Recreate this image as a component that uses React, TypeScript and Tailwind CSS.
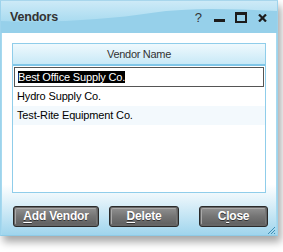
import React from "react";

const font = { fontFamily: '"Liberation Sans", Arial, sans-serif' };

function Btn({ w, pre, u, post }: { w: string; pre: string; u: string; post: string }) {
  return (
    <div
      className={`${w} h-[21px] rounded-[3px] border border-[#2a2a2a] p-px bg-[#666]`}
    >
      <div className="h-full w-full rounded-[2px] border-t border-l border-[#a9a9a9] border-r border-b border-r-[#777] border-b-[#666] bg-gradient-to-b from-[#8d8d8d] via-[#747474] to-[#626262] flex items-center justify-center">
        <span className="text-white font-bold text-[12px] tracking-[-0.2px] leading-none [text-shadow:0_1px_0_#333]">
          {pre}
          <span className="underline underline-offset-[2px]">{u}</span>
          {post}
        </span>
      </div>
    </div>
  );
}

export default function App() {
  return (
    <div className="w-[283px] h-[252px] bg-white" style={font}>
      <div className="w-[278px] h-[236px] flex flex-col border border-t-[#a8d6ec] border-x-[#9dd3ec] border-b-[#8fcbe6] bg-[#a6d9ef] shadow-[3px_6px_8px_rgba(0,0,0,0.35)]">
        {/* Title bar */}
        <div className="relative h-[32px] shrink-0 overflow-hidden bg-[#96d0ea]">
          <svg className="absolute inset-0" width="278" height="32" viewBox="0 0 278 32">
            <defs>
              <linearGradient id="tg" x1="0" y1="0" x2="0" y2="1">
                <stop offset="0" stopColor="#cdeaf7" />
                <stop offset="1" stopColor="#a9dbf0" />
              </linearGradient>
            </defs>
            <path d="M0 0 H278 V10 C230 8 190 6 150 12 C110 18 60 22 0 20 Z" fill="url(#tg)" />
          </svg>
          <div className="relative flex items-center h-full pl-[9px] pr-[10px]">
            <span className="text-[12.5px] font-bold text-[#333] tracking-[-0.2px]">Vendors</span>
            <div className="flex-1" />
            <span className="text-[13px] text-[#333] leading-none mr-[12px] mt-[1px]">?</span>
            <div className="w-[11px] h-[3px] bg-[#1c1c1c] mt-[7px] mr-[10px]" />
            <div className="w-[12px] h-[11px] border-2 border-t-[3px] border-[#1c1c1c] mr-[11px] mt-[1px]" />
            <svg width="9" height="8" viewBox="0 0 9 8" className="mt-[1px]">
              <path d="M1 0.5 L8 7.5 M8 0.5 L1 7.5" stroke="#1c1c1c" strokeWidth="2.2" />
            </svg>
          </div>
        </div>
        {/* Body */}
        <div className="flex-1 flex flex-col bg-gradient-to-b from-white from-[75%] to-[#9fd5ed] ml-px mr-px">
          <div className="pt-[10px] px-[10px]">
            <div className="h-[150px] border border-[#8fcdea] bg-white flex flex-col">
              <div className="h-[22px] shrink-0 bg-gradient-to-b from-[#eff9fd] to-[#c8e9f7] border-b-2 border-[#7fc6e8] flex items-center justify-center">
                <span className="text-[11px] text-[#333] tracking-[-0.3px]">Vendor Name</span>
              </div>
              <div className="h-[20px] mx-px mt-px border border-[#555] flex items-center pl-[3px]">
                <span className="bg-black text-white text-[11px] leading-[12px] tracking-[-0.15px]">
                  Best Office Supply Co.
                </span>
              </div>
              <div className="h-[19px] flex items-center pl-[4px]">
                <span className="text-black text-[11px] tracking-[-0.15px]">Hydro Supply Co.</span>
              </div>
              <div className="h-[19px] flex items-center pl-[4px] bg-[#f3f9fd]">
                <span className="text-black text-[11px] tracking-[-0.15px]">Test-Rite Equipment Co.</span>
              </div>
            </div>
          </div>
          <div className="flex-1 relative flex items-center pl-[11px] pr-[8px] pt-[4px]">
            <Btn w="w-[86px]" pre="" u="A" post="dd Vendor" />
            <div className="w-[10px]" />
            <Btn w="w-[70px]" pre="" u="D" post="elete" />
            <div className="flex-1" />
            <Btn w="w-[69px]" pre="C" u="l" post="ose" />
            <svg className="absolute right-0 bottom-0" width="9" height="9" viewBox="0 0 9 9">
              <path d="M8 1 L1 8 M8 4 L4 8 M8 7 L7 8" stroke="#3f8fb5" strokeWidth="1" />
            </svg>
          </div>
        </div>
      </div>
    </div>
  );
}
